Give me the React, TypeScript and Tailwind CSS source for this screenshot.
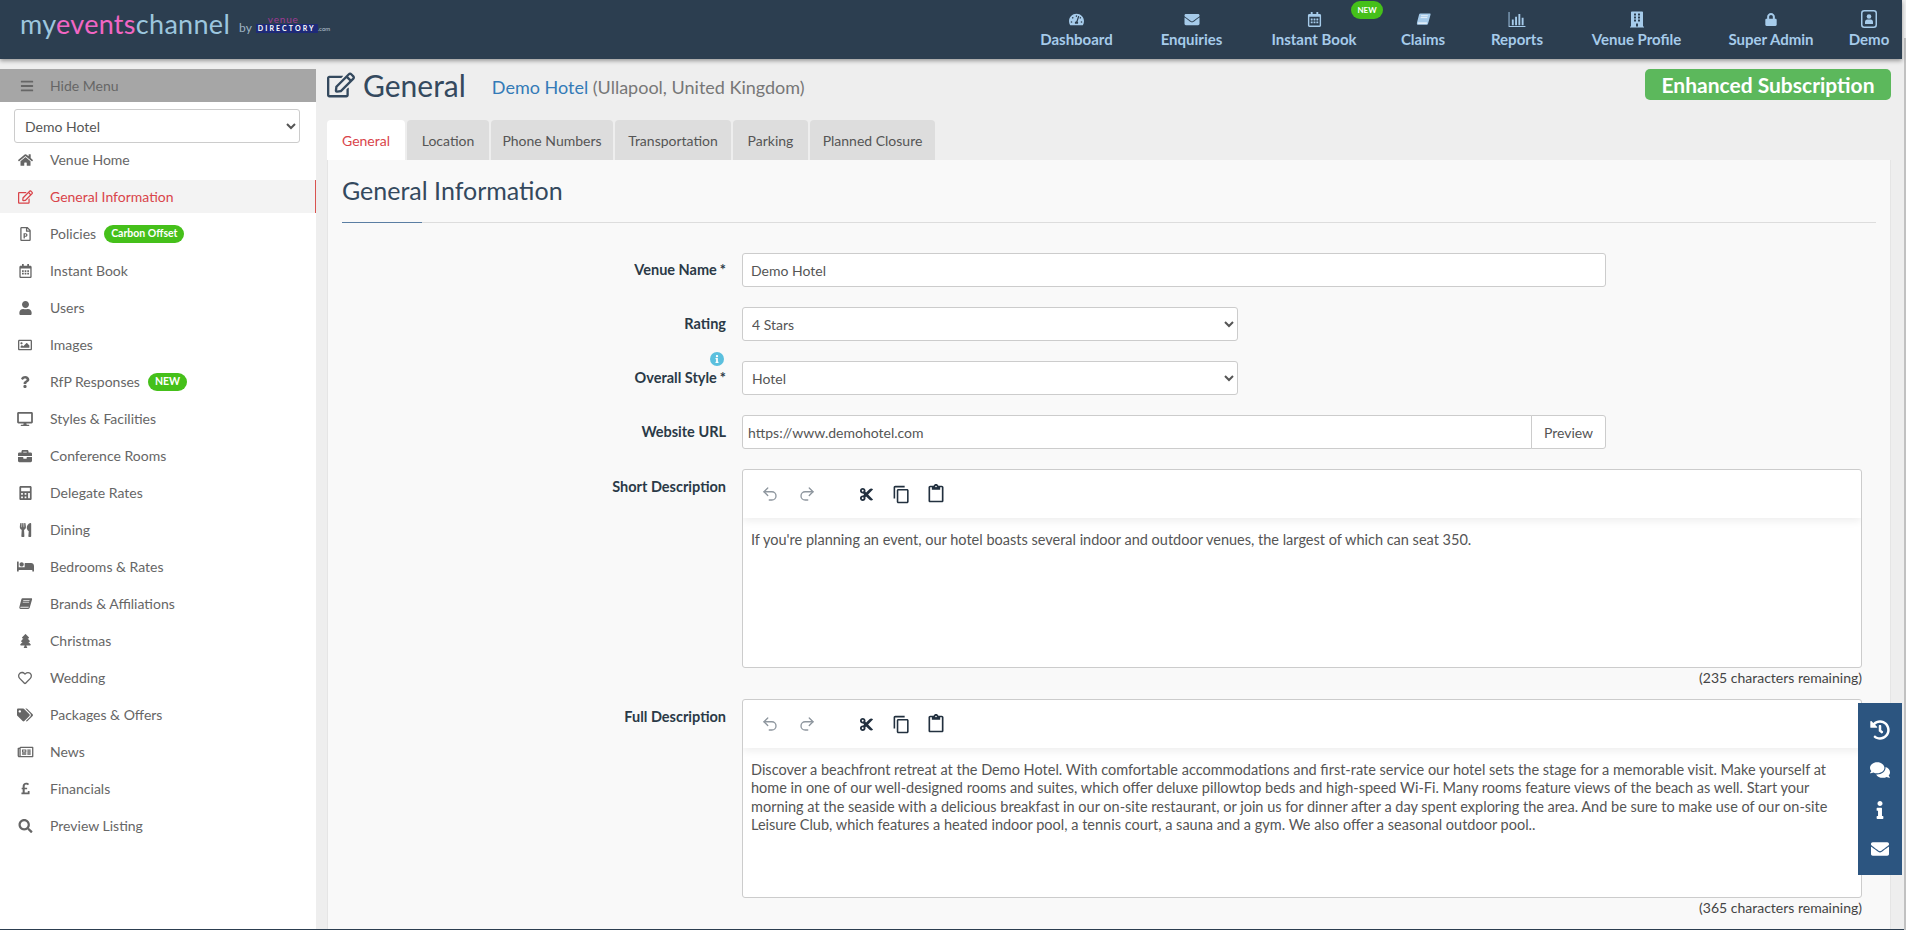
import React from "react";
import {
  FaHome, FaRegEdit, FaRegFilePowerpoint, FaRegCalendarAlt, FaUser, FaRegImage, FaQuestion, FaDesktop,
  FaBriefcase, FaCalculator, FaUtensils, FaBed, FaTree, FaRegHeart, FaTags, FaRegNewspaper, FaPoundSign,
  FaSearch, FaBars, FaTachometerAlt, FaEnvelope, FaLock, FaBuilding, FaHistory, FaComments, FaInfo, FaCut,
} from "react-icons/fa";
import { MdContentCopy, MdOutlineContentPaste } from "react-icons/md";
import { Undo2, Redo2 } from "lucide-react";

const FONT = "font-['Lato','Open_Sans',sans-serif]";

function SlantBook({ className }: { className?: string }) {
  return (
    <svg viewBox="0 0 16 16" className={className} fill="currentColor">
      <path d="M4.6 1.5h10c.8 0 1.1.6.9 1.3l-2.7 9.6c-.2.8-.8 1.2-1.6 1.2H2.4C1.2 13.6.7 12.5 1 11.4L3.3 2.6c.2-.7.6-1.1 1.3-1.1z" />
      <path d="M2.6 11.2h9.2l-.4 1.2H2.6c-.7 0-.7-1.2 0-1.2z" fill="#fff" opacity=".9" />
      <path d="M5.4 4h7.2M4.9 6h7.2" stroke="#fff" strokeWidth=".8" />
    </svg>
  );
}

function Bars({ className }: { className?: string }) {
  return (
    <svg viewBox="0 0 18 16" className={className} fill="currentColor">
      <path d="M0 0h1v15h17v1H0z" />
      <path d="M3.5 8h2v6h-2zM7 5h2v9H7zM10.500 2h2v12h-2zM14 6h2v8h-2z" />
    </svg>
  );
}

function UserBox({ className }: { className?: string }) {
  return (
    <svg viewBox="0 0 16 18" className={className} fill="none">
      <rect x=".75" y=".75" width="14.500" height="16.500" rx="2.500" stroke="currentColor" strokeWidth="1.500" />
      <circle cx="8" cy="6.500" r="2.300" fill="currentColor" />
      <path d="M4 14v-2c0-1.500 1-2.500 2.200-2.500h3.600c1.200 0 2.200 1 2.200 2.500v2z" fill="currentColor" />
    </svg>
  );
}

const topNav = [
  { label: "Dashboard", icon: <FaTachometerAlt className="h-[15px] w-[15px]" />, w: "w-[115px]" },
  { label: "Enquiries", icon: <FaEnvelope className="h-[15px] w-[16px]" />, w: "w-[115px]" },
  { label: "Instant Book", icon: <FaRegCalendarAlt className="h-[15px] w-[15px]" />, w: "w-[130px]", badge: true },
  { label: "Claims", icon: <SlantBook className="h-[15px] w-[15px]" />, w: "w-[88px]" },
  { label: "Reports", icon: <Bars className="h-[15px] w-[18px]" />, w: "w-[100px]" },
  { label: "Venue Profile", icon: <FaBuilding className="h-[17px] w-[14px]" />, w: "w-[139px]" },
  { label: "Super Admin", icon: <FaLock className="h-[13px] w-[12px]" />, w: "w-[130px]" },
  { label: "Demo", icon: <UserBox className="h-[18px] w-[16px]" />, w: "w-[66px]" },
];

const ic = "h-[14px] w-[15px]";
const sideNav: { label: string; icon: React.ReactNode; active?: boolean; badge?: string }[] = [
  { label: "Venue Home", icon: <FaHome className={ic} /> },
  { label: "General Information", icon: <FaRegEdit className={ic} />, active: true },
  { label: "Policies", icon: <FaRegFilePowerpoint className={ic} />, badge: "Carbon Offset" },
  { label: "Instant Book", icon: <FaRegCalendarAlt className={ic} /> },
  { label: "Users", icon: <FaUser className={ic} /> },
  { label: "Images", icon: <FaRegImage className="h-[14px] w-[16px]" /> },
  { label: "RfP Responses", icon: <FaQuestion className="h-[12px] w-[12px]" />, badge: "NEW" },
  { label: "Styles & Facilities", icon: <FaDesktop className="h-[14px] w-[16px]" /> },
  { label: "Conference Rooms", icon: <FaBriefcase className="h-[14px] w-[16px]" /> },
  { label: "Delegate Rates", icon: <FaCalculator className={ic} /> },
  { label: "Dining", icon: <FaUtensils className={ic} /> },
  { label: "Bedrooms & Rates", icon: <FaBed className="h-[15px] w-[17px]" /> },
  { label: "Brands & Affiliations", icon: <SlantBook className={ic} /> },
  { label: "Christmas", icon: <FaTree className={ic} /> },
  { label: "Wedding", icon: <FaRegHeart className="h-[14px] w-[16px]" /> },
  { label: "Packages & Offers", icon: <FaTags className="h-[14px] w-[16px]" /> },
  { label: "News", icon: <FaRegNewspaper className="h-[14px] w-[17px]" /> },
  { label: "Financials", icon: <FaPoundSign className="h-[13px] w-[11px]" /> },
  { label: "Preview Listing", icon: <FaSearch className={ic} /> },
];

const tabs = [
  { label: "General", w: "w-[78px]", active: true },
  { label: "Location", w: "w-[82px]" },
  { label: "Phone Numbers", w: "w-[122px]" },
  { label: "Transportation", w: "w-[116px]" },
  { label: "Parking", w: "w-[75px]" },
  { label: "Planned Closure", w: "w-[125px]" },
];

function Field({ label, star, info, top, children }: { label: string; star?: boolean; info?: boolean; top?: boolean; children: React.ReactNode }) {
  return (
    <div className="flex gap-[16px]">
      <div className={`relative w-[384px] shrink-0 text-right text-[14.500px] font-bold text-[#2b3a47] ${top ? "pt-[8px] leading-[20px]" : "flex h-[34px] items-center justify-end"}`}>
        <span>{label}</span>
        {star && <span className="ml-[3px]">*</span>}
        {info && (
          <span className="absolute right-[2px] top-[-9px] flex h-[14px] w-[14px] items-center justify-center rounded-full bg-[#5bc0de] text-white">
            <FaInfo className="h-[8px] w-[8px]" />
          </span>
        )}
      </div>
      {children}
    </div>
  );
}

function Editor({ remaining, children }: { remaining: string; children: React.ReactNode }) {
  return (
    <div className="w-[1120px]">
      <div className="h-[199px] overflow-hidden rounded-[3px] border border-[#ccc] bg-white">
        <div className="flex h-[48px] items-center pl-[18px] shadow-[0_3px_8px_rgba(0,0,0,0.07)]">
          <Undo2 className="h-[18px] w-[18px] text-[#8f979f]" strokeWidth={1.8} />
          <Redo2 className="ml-[19px] h-[18px] w-[18px] text-[#8f979f]" strokeWidth={1.8} />
          <FaCut className="ml-[43px] h-[15px] w-[15px] text-[#22303f]" />
          <MdContentCopy className="ml-[18px] h-[19px] w-[19px] text-[#22303f]" />
          <MdOutlineContentPaste className="ml-[15px] h-[20px] w-[20px] text-[#22303f]" />
        </div>
        <div className="px-[8px] pt-[13px] text-[14.500px] leading-[18.400px] text-[#555]">{children}</div>
      </div>
      <div className="mt-[1px] text-right text-[14px] leading-[18px] text-[#444]">{remaining}</div>
    </div>
  );
}

const control = "h-[34px] rounded-[3px] border border-[#ccc] bg-white text-[14px] text-[#555] outline-none";

export default function App() {
  return (
    <div className={`relative flex h-[930px] w-[1906px] flex-col overflow-hidden bg-[#eee] ${FONT}`}>
      <header className="relative z-10 mr-[4px] flex h-[59px] shrink-0 items-start justify-between bg-[#2c3e50] shadow-[0_2px_4px_rgba(0,0,0,0.35)]">
        <div className="flex items-center pl-[20px] pt-[9px]">
          <div className="text-[27px] font-normal leading-[30px] tracking-[0.3px] text-[#9cc6de]">
            my<span className="text-[#f266c4]">events</span>channel
          </div>
          <div className="ml-[9px] mt-[7px] text-[12px] leading-[14px] text-[#9fb4c4]">by</div>
          <div className="ml-[4px] flex flex-col items-start">
            <div className="ml-[12px] text-[10px] leading-[9px] tracking-[0.8px] text-[#a03a96]">venue</div>
            <div className="flex items-end">
              <div className="bg-[#1e2a78] px-[2px] text-[7px] font-bold leading-[9px] tracking-[2.100px] text-white">DIRECTORY</div>
              <div className="text-[6px] leading-[8px] text-[#b8c4d0]">.com</div>
            </div>
          </div>
        </div>
        <nav className="flex items-start">
          {topNav.map((n) => (
            <div key={n.label} className={`relative flex h-[59px] flex-col items-center pt-[10px] text-[#a6cbea] ${n.w}`}>
              <div className="flex h-[18px] items-center">{n.icon}</div>
              <div className="mt-[1px] text-[15px] font-bold leading-[20px]">{n.label}</div>
              {n.badge && (
                <div className="absolute right-[-4px] top-[1px] flex h-[18px] w-[32px] items-center justify-center rounded-full bg-[#45c01a] text-[8px] font-bold text-white">NEW</div>
              )}
            </div>
          ))}
        </nav>
      </header>

      <div className="flex min-h-0 flex-1">
        <aside className="mt-[10px] w-[316px] shrink-0 bg-white">
          <div className="flex h-[33px] items-center bg-[#a6a6a6] pl-[20px] text-[14px] text-[#666]">
            <FaBars className="h-[14px] w-[14px]" />
            <span className="ml-[16px]">Hide Menu</span>
          </div>
          <div className="px-[14px] pt-[7px]">
            <select className={`w-[286px] pl-[6px] ${control}`} defaultValue="Demo Hotel">
              <option>Demo Hotel</option>
            </select>
          </div>
          <ul className="-mt-[2px]">
            {sideNav.map((n) => (
              <li key={n.label} className={`flex h-[37px] items-center ${n.active ? "" : ""}`}>
                <div className={`flex h-[33px] w-full items-center ${n.active ? "border-r border-[#d9534f] bg-[#f3f3f3] text-[#d9444a]" : "text-[#666]"}`}>
                  <span className="flex w-[50px] shrink-0 justify-center pl-[2px] pr-[2px]">{n.icon}</span>
                  <span className="text-[14px]">{n.label}</span>
                  {n.badge && (
                    <span className="ml-[8px] flex h-[18px] items-center rounded-full bg-[#45c01a] px-[7px] text-[10.500px] font-bold text-white">{n.badge}</span>
                  )}
                </div>
              </li>
            ))}
          </ul>
        </aside>

        <main className="min-w-0 flex-1 pl-[11px] pr-[15px]">
          <div className="flex h-[61px] items-start justify-between">
            <div className="flex items-center pt-[10px] text-[#34495e]">
              <FaRegEdit className="h-[26px] w-[28px]" />
              <h1 className="ml-[8px] text-[30px] font-normal leading-[32px]">General</h1>
              <div className="ml-[26px] pt-[4px] text-[18px]">
                <span className="text-[#337ab7]">Demo Hotel</span> <span className="text-[#777]">(Ullapool, United Kingdom)</span>
              </div>
            </div>
            <div className="mt-[10px] flex h-[31px] w-[246px] items-center justify-center rounded-[5px] bg-[#5cb85c] text-[21px] font-bold text-white">Enhanced Subscription</div>
          </div>

          <div className="flex h-[40px] gap-[2px]">
            {tabs.map((t) => (
              <div key={t.label} className={`flex items-center justify-center rounded-t-[4px] pt-[1px] text-[14px] ${t.w} ${t.active ? "bg-white text-[#d9444a]" : "bg-[#ddd] text-[#555]"}`}>
                {t.label}
              </div>
            ))}
          </div>

          <section className="h-[800px] border border-t-0 border-[#e5e5e5] bg-[#f9f9f9] px-[14px]">
            <h2 className="pt-[15px] text-[25px] font-normal leading-[30px] text-[#34495e]">General Information</h2>
            <div className="mt-[17px] h-px bg-[#ddd]">
              <div className="h-px w-[80px] bg-[#5a7ea3]" />
            </div>
            <div className="flex flex-col gap-[20px] pt-[30px]">
              <Field label="Venue Name" star>
                <input className={`w-[864px] px-[8px] ${control}`} defaultValue="Demo Hotel" />
              </Field>
              <Field label="Rating">
                <select className={`w-[496px] px-[5px] ${control}`} defaultValue="4 Stars">
                  <option>4 Stars</option>
                </select>
              </Field>
              <Field label="Overall Style" star info>
                <select className={`w-[496px] px-[5px] ${control}`} defaultValue="Hotel">
                  <option>Hotel</option>
                </select>
              </Field>
              <Field label="Website URL">
                <div className="flex w-[864px]">
                  <input className={`min-w-0 flex-1 rounded-r-none px-[5px] ${control}`} defaultValue="https://www.demohotel.com" />
                  <div className={`-ml-px flex w-[75px] items-center justify-center rounded-l-none ${control}`}>Preview</div>
                </div>
              </Field>
              <div className="flex flex-col gap-[12px]">
                <Field label="Short Description" top>
                  <Editor remaining="(235 characters remaining)">
                    If you're planning an event, our hotel boasts several indoor and outdoor venues, the largest of which can seat 350.
                  </Editor>
                </Field>
                <Field label="Full Description" top>
                  <Editor remaining="(365 characters remaining)">
                    Discover a beachfront retreat at the Demo Hotel. With comfortable accommodations and first-rate service our hotel sets the stage for a memorable visit. Make yourself at
                    <br />
                    home in one of our well-designed rooms and suites, which offer deluxe pillowtop beds and high-speed Wi-Fi. Many rooms feature views of the beach as well. Start your
                    <br />
                    morning at the seaside with a delicious breakfast in our on-site restaurant, or join us for dinner after a day spent exploring the area. And be sure to make use of our on-site
                    <br />
                    Leisure Club, which features a heated indoor pool, a tennis court, a sauna and a gym. We also offer a seasonal outdoor pool..
                  </Editor>
                </Field>
              </div>
            </div>
          </section>
        </main>
      </div>
      <div className="h-px shrink-0 bg-[#2c3e50]" />

      <div className="absolute right-0 top-[38px] bottom-0 w-[2px] bg-[#c1c1c1]" />
      <div className="absolute right-[4px] top-[703px] flex h-[172px] w-[44px] flex-col items-center justify-around bg-[#2c5580] py-[6px] text-white">
        <FaHistory className="h-[20px] w-[20px]" />
        <FaComments className="h-[18px] w-[20px]" />
        <FaInfo className="h-[18px] w-[10px]" />
        <FaEnvelope className="h-[18px] w-[20px]" />
      </div>
    </div>
  );
}
